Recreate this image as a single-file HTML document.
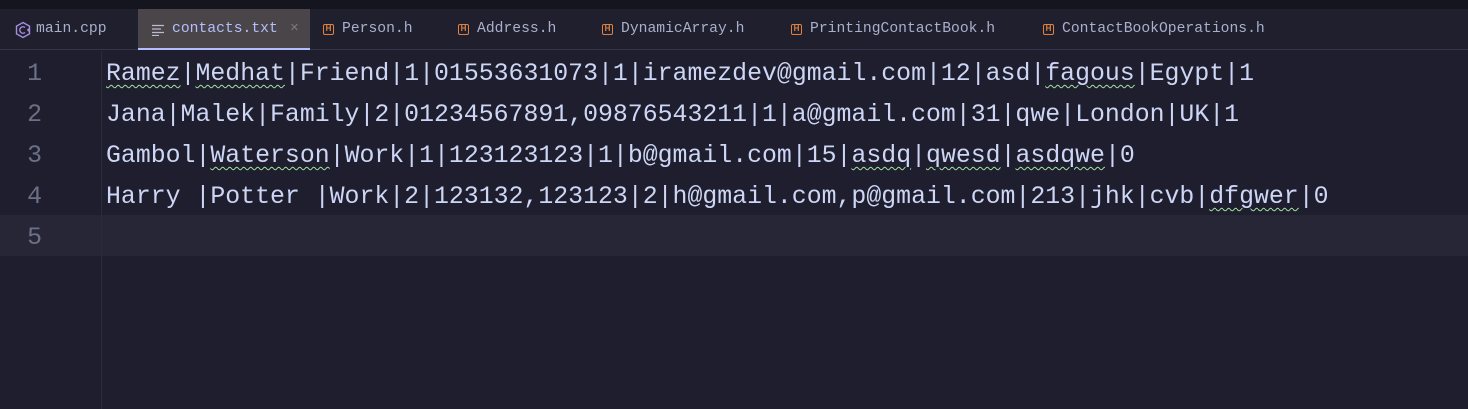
<!DOCTYPE html>
<html><head><style>
*{margin:0;padding:0;box-sizing:border-box}
body{width:1468px;height:409px;background:#1e1e2e;overflow:hidden;position:relative;font-family:"Liberation Mono",monospace}
#top{position:absolute;left:0;top:0;width:1468px;height:9px;background:#14151e}
#tabs{position:absolute;left:0;top:9px;width:1468px;height:41px;background:#1f1f2d;border-bottom:1px solid #34354a}
.t{position:absolute;top:0;height:41px;line-height:41px;font-size:14.7px;color:#a9b0cc;white-space:nowrap}
.act{left:138px;width:172px;background:#4a4549;border-bottom:2px solid #b4befe;color:#b4befe}
.h{position:absolute;top:15px;width:11px;height:11px;border:1.5px solid #e0823d;border-radius:2px;font-size:8px;line-height:8px;color:#e0823d;text-align:center;font-family:"Liberation Sans",sans-serif;font-weight:bold}
#gut{position:absolute;left:0;top:51px;width:102px;height:358px;border-right:1px solid #2a2b3b}
#cur{position:absolute;left:0;top:215px;width:1468px;height:41px;background:#262637}
.n{position:absolute;left:0;width:42px;text-align:right;font-size:24.85px;color:#6c7086;height:41px;line-height:46px}
.l{position:absolute;left:106px;font-size:24.85px;color:#cdd6f4;height:41px;line-height:46px;white-space:pre}
u{text-decoration:underline wavy #a6e3a1;text-decoration-thickness:1px;text-underline-offset:4px}
</style></head><body>
<div id="top"></div>
<div id="tabs">
 <div class="t" style="left:14px"><svg width="18" height="18" viewBox="0 0 18 18" style="position:absolute;top:12px;left:0"><path d="M9 1.5 L15.5 5.2 V12.8 L9 16.5 L2.5 12.8 V5.2 Z" fill="none" stroke="#a98ee0" stroke-width="1.4"/><path d="M11 6.5 A3.2 3.2 0 1 0 11 11.5" fill="none" stroke="#a98ee0" stroke-width="1.4"/><path d="M13 9h3M14.5 7.5v3" stroke="#a98ee0" stroke-width="1.2"/></svg><span style="margin-left:22px">main.cpp</span></div>
 <div class="t act"><svg width="14" height="12" style="position:absolute;left:14px;top:15px"><path d="M0 1.5h12M0 5h9M0 8.5h12M0 11.5h7" stroke="#b8bccc" stroke-width="1.2"/></svg><span style="margin-left:34px">contacts.txt</span><span style="position:absolute;left:152px;color:#7a7a88">×</span></div>
 <div class="t" style="left:323px"><div class="h">H</div><span style="margin-left:19px">Person.h</span></div>
 <div class="t" style="left:458px"><div class="h">H</div><span style="margin-left:19px">Address.h</span></div>
 <div class="t" style="left:602px"><div class="h">H</div><span style="margin-left:19px">DynamicArray.h</span></div>
 <div class="t" style="left:791px"><div class="h">H</div><span style="margin-left:19px">PrintingContactBook.h</span></div>
 <div class="t" style="left:1043px"><div class="h">H</div><span style="margin-left:19px">ContactBookOperations.h</span></div>
</div>
<div id="cur"></div>
<div id="gut"></div>
<div class="n" style="top:51px">1</div>
<div class="n" style="top:92px">2</div>
<div class="n" style="top:133px">3</div>
<div class="n" style="top:174px">4</div>
<div class="n" style="top:215px">5</div>
<div class="l" style="top:51px"><u>Ramez</u>|<u>Medhat</u>|Friend|1|01553631073|1|iramezdev@gmail.com|12|asd|<u>fagous</u>|Egypt|1</div>
<div class="l" style="top:92px">Jana|Malek|Family|2|01234567891,09876543211|1|a@gmail.com|31|qwe|London|UK|1</div>
<div class="l" style="top:133px">Gambol|<u>Waterson</u>|Work|1|123123123|1|b@gmail.com|15|<u>asdq</u>|<u>qwesd</u>|<u>asdqwe</u>|0</div>
<div class="l" style="top:174px">Harry |Potter |Work|2|123132,123123|2|h@gmail.com,p@gmail.com|213|jhk|cvb|<u>dfgwer</u>|0</div>
</body></html>
